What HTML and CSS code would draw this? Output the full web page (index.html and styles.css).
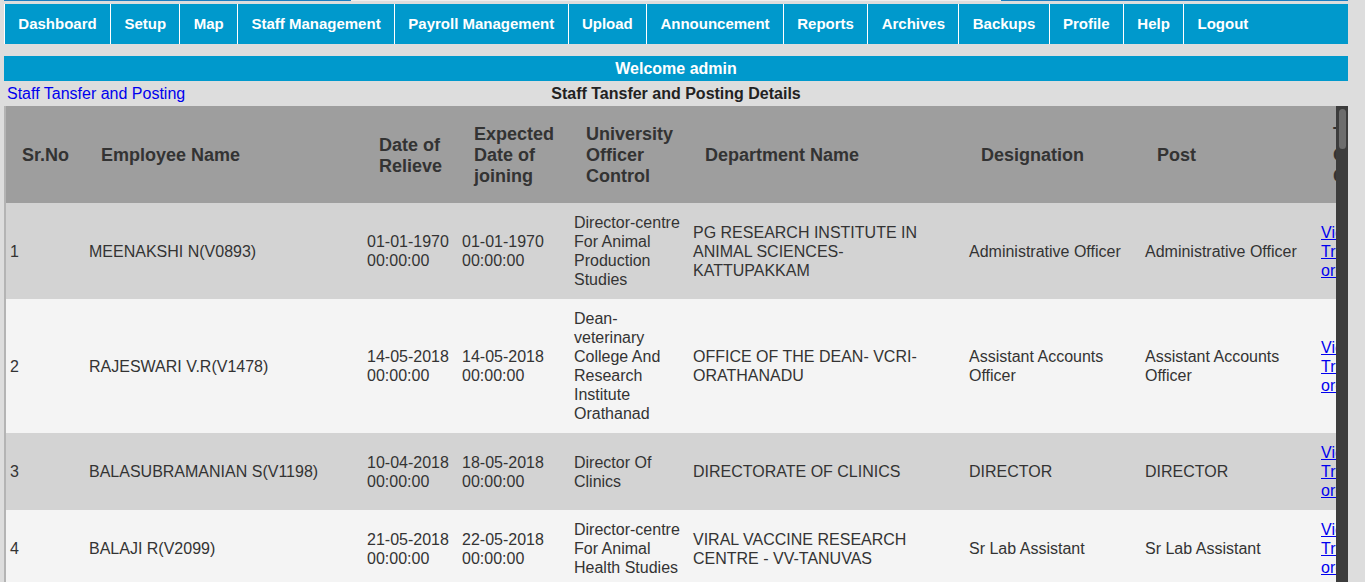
FILE: index.html
```html
<!DOCTYPE html>
<html lang="en">
<head>
<meta charset="utf-8">
<title>Staff Tansfer and Posting</title>
<link rel="stylesheet" href="styles.css">
</head>
<body>
<div class="top-strip"><span class="seg seg-blue"></span><span class="seg seg-light"></span><span class="seg seg-blue"></span></div>
<nav class="menu">
  <ul class="menu-list">
    <li class="menu-item"><a href="#">Dashboard</a></li>
    <li class="menu-item"><a href="#">Setup</a></li>
    <li class="menu-item"><a href="#">Map</a></li>
    <li class="menu-item"><a href="#">Staff Management</a></li>
    <li class="menu-item"><a href="#">Payroll Management</a></li>
    <li class="menu-item"><a href="#">Upload</a></li>
    <li class="menu-item"><a href="#">Announcement</a></li>
    <li class="menu-item"><a href="#">Reports</a></li>
    <li class="menu-item"><a href="#">Archives</a></li>
    <li class="menu-item"><a href="#">Backups</a></li>
    <li class="menu-item"><a href="#">Profile</a></li>
    <li class="menu-item"><a href="#">Help</a></li>
    <li class="menu-item"><a href="#">Logout</a></li>
  </ul>
</nav>
<div class="welcome">Welcome admin</div>
<div class="title-row">
  <a class="crumb" href="#">Staff Tansfer and Posting</a>
  <h2 class="page-title">Staff Tansfer and Posting Details</h2>
  <span></span>
</div>
<div class="frame">
  <div class="table-scroll">
    <table class="grid">
      <colgroup>
        <col class="c-sr"><col class="c-name"><col class="c-rel"><col class="c-join"><col class="c-uoc"><col class="c-dept"><col class="c-desig"><col class="c-post"><col class="c-order">
      </colgroup>
      <thead>
        <tr>
          <th>Sr.No</th>
          <th>Employee Name</th>
          <th>Date of Relieve</th>
          <th>Expected Date of joining</th>
          <th>University Officer Control</th>
          <th>Department Name</th>
          <th>Designation</th>
          <th>Post</th>
          <th>Transfer Order Copy</th>
        </tr>
      </thead>
      <tbody>
        <tr class="odd">
          <td>1</td>
          <td>MEENAKSHI N(V0893)</td>
          <td>01-01-1970 00:00:00</td>
          <td>01-01-1970 00:00:00</td>
          <td>Director-centre For Animal Production Studies</td>
          <td>PG RESEARCH INSTITUTE IN ANIMAL SCIENCES-KATTUPAKKAM</td>
          <td>Administrative Officer</td>
          <td>Administrative Officer</td>
          <td><a href="#">View Transfer order</a></td>
        </tr>
        <tr class="even">
          <td>2</td>
          <td>RAJESWARI V.R(V1478)</td>
          <td>14-05-2018 00:00:00</td>
          <td>14-05-2018 00:00:00</td>
          <td>Dean-veterinary College And Research Institute Orathanad</td>
          <td>OFFICE OF THE DEAN- VCRI-ORATHANADU</td>
          <td>Assistant Accounts Officer</td>
          <td>Assistant Accounts Officer</td>
          <td><a href="#">View Transfer order</a></td>
        </tr>
        <tr class="odd">
          <td>3</td>
          <td>BALASUBRAMANIAN S(V1198)</td>
          <td>10-04-2018 00:00:00</td>
          <td>18-05-2018 00:00:00</td>
          <td>Director Of Clinics</td>
          <td>DIRECTORATE OF CLINICS</td>
          <td>DIRECTOR</td>
          <td>DIRECTOR</td>
          <td><a href="#">View Transfer order</a></td>
        </tr>
        <tr class="even">
          <td>4</td>
          <td>BALAJI R(V2099)</td>
          <td>21-05-2018 00:00:00</td>
          <td>22-05-2018 00:00:00</td>
          <td>Director-centre For Animal Health Studies</td>
          <td>VIRAL VACCINE RESEARCH CENTRE - VV-TANUVAS</td>
          <td>Sr Lab Assistant</td>
          <td>Sr Lab Assistant</td>
          <td><a href="#">View Transfer order</a></td>
        </tr>
        <tr class="odd">
          <td>5</td>
          <td>KUMAR S(V1021)</td>
          <td>01-06-2018 00:00:00</td>
          <td>04-06-2018 00:00:00</td>
          <td>Director Of Clinics</td>
          <td>DIRECTORATE OF CLINICS</td>
          <td>Assistant</td>
          <td>Assistant</td>
          <td><a href="#">View Transfer order</a></td>
        </tr>
      </tbody>
    </table>
  </div>
  <div class="vscroll"><div class="thumb"></div></div>
</div>
</body>
</html>
```
FILE: styles.css
```css
html {
  overflow: hidden;
}
body {
  margin: 0 4px;
  width: 1344px;
  background: #dddddd;
  font-family: "Liberation Sans", Arial, sans-serif;
  font-size: 16px;
  color: #333333;
}
.top-strip {
  display: flex;
  height: 1px;
  margin-bottom: 3px;
}
.seg-blue {
  width: 347px;
  background: #1b7dc0;
}
.seg-light {
  flex: 1;
  background: #eeeeee;
}
.menu {
  background: #0099cc;
  height: 40px;
}
.menu-list {
  display: flex;
  margin: 0;
  padding: 0;
  list-style: none;
  height: 40px;
}
.menu-item {
  border-left: 1px solid #ffffff;
  display: flex;
  align-items: center;
}
.menu-item a {
  padding: 0 13.35px 1px;
  color: #ffffff;
  font-weight: bold;
  font-size: 15px;
  text-decoration: none;
}
.welcome {
  margin-top: 12px;
  height: 25px;
  background: #0099cc;
  color: #ffffff;
  font-weight: bold;
  font-size: 16px;
  display: flex;
  align-items: center;
  justify-content: center;
}
.title-row {
  display: grid;
  grid-template-columns: 1fr auto 1fr;
  align-items: center;
  height: 25px;
}
.crumb {
  padding-left: 3px;
  color: #0000ee;
  text-decoration: none;
  font-size: 16px;
}
.page-title {
  margin: 0;
  font-size: 16px;
  font-weight: bold;
  color: #222222;
}
.frame {
  display: flex;
  height: 476px;
  overflow: hidden;
}
.table-scroll {
  flex: 1;
  min-width: 0;
  overflow: hidden;
  border-left: 2px solid #b4b4b4;
}
.vscroll {
  width: 12px;
  background: #3c3c3c;
  padding-top: 3px;
  display: flex;
  justify-content: center;
}
.thumb {
  width: 7px;
  height: 40px;
  border-radius: 4px;
  background: #6d6d6d;
}
.grid {
  table-layout: fixed;
  width: 1403px;
  border-collapse: collapse;
}
.c-sr { width: 79px; }
.c-name { width: 278px; }
.c-rel { width: 95px; }
.c-join { width: 112px; }
.c-uoc { width: 119px; }
.c-dept { width: 276px; }
.c-desig { width: 176px; }
.c-post { width: 176px; }
.c-order { width: 92px; }
.grid th {
  background: #9e9e9e;
  color: #333333;
  font-size: 18px;
  font-weight: bold;
  line-height: 21px;
  text-align: left;
  padding: 18px 4px 16px 16px;
  vertical-align: middle;
}
.grid td {
  padding: 10px 6px 10px 4px;
  line-height: 19px;
  vertical-align: middle;
  color: #333333;
}
.grid tr.odd td {
  background: #d3d3d3;
}
.grid tr.even td {
  background: #f4f4f4;
}
.grid td a {
  color: #0000ee;
  text-decoration: underline;
}
```
